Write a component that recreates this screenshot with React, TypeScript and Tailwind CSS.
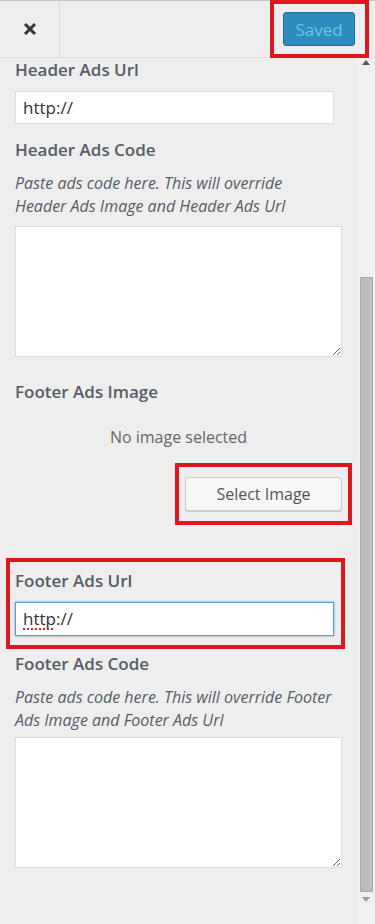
import React from "react"

const font = { fontFamily: '"Open Sans", "Noto Sans", sans-serif' }

function Label({ children, className = "" }: { children: React.ReactNode; className?: string }) {
  return (
    <div className={`text-[17px] leading-[24px] font-semibold text-[#555d66] ${className}`}>
      {children}
    </div>
  )
}

function Hint({ children, className = "" }: { children: React.ReactNode; className?: string }) {
  return (
    <div className={`text-[16px] leading-[23px] italic text-[#555d66] ${className}`}>
      {children}
    </div>
  )
}

export default function App() {
  return (
    <div style={font} className="w-[375px] h-[924px] bg-[#eeeeee] flex flex-col overflow-hidden">
      {/* top bar */}
      <div className="h-[58px] flex items-stretch border-t border-[#c4c4c4] border-b border-b-[#dddddd] shrink-0">
        <button className="w-[60px] border-r border-[#dddddd] flex items-center justify-center">
          <svg className="w-[14px] h-[14px]" viewBox="0 0 14 14" fill="none" stroke="#333" strokeWidth={3}>
            <path d="M2 2l10 10M12 2L2 12" />
          </svg>
        </button>
        <div className="flex-1" />
        <div className="mr-[6px] -mt-px -mb-px border-4 border-[#e0161f] pt-[8px] pl-[9px] pr-[10px]">
          <button className="w-[72px] h-[34px] rounded-[3px] bg-[#2e8cc1] border border-[#1f6d98] text-[#6bc6e8] text-[17px] leading-none">
            Saved
          </button>
        </div>
      </div>

      <div className="flex flex-1 min-h-0">
        {/* settings */}
        <div className="flex-1 pl-[15px]">
          <Label>Header Ads Url</Label>
          <input
            readOnly
            value="http://"
            className="mt-[9px] block w-[319px] h-[33px] bg-white border border-[#dddddd] px-[7px] text-[17px] text-[#333] outline-none"
          />

          <Label className="mt-[14px]">Header Ads Code</Label>
          <Hint className="mt-[10px]">
            Paste ads code here. This will override<br />Header Ads Image and Header Ads Url
          </Hint>
          <textarea className="mt-[8px] block w-[327px] h-[131px] bg-white border border-[#dddddd] outline-none" />

          <Label className="mt-[23px]">Footer Ads Image</Label>
          <div className="mt-[22px] w-[327px] text-center text-[16px] leading-[23px] text-[#666]">
            No image selected
          </div>
          <div className="mt-[14px] w-[337px] flex justify-end">
            <div className="border-4 border-[#e0161f] px-[6px] py-[10px]">
              <button className="w-[157px] h-[34px] rounded-[3px] bg-[#f7f7f7] border border-[#cccccc] shadow-[0_1px_0_#cccccc] text-[16px] text-[#555]">
                Select Image
              </button>
            </div>
          </div>

          <div className="mt-[33px] -ml-[9px] w-[339px] border-4 border-[#e0161f] pl-[5px] pt-[7px] pb-[9px]">
            <Label>Footer Ads Url</Label>
            <div className="mt-[9px] relative w-[319px] h-[34px] bg-white border border-[#5b9dd9] shadow-[0_0_2px_rgba(30,140,190,0.8)] px-[7px] flex items-center text-[17px] text-[#333]">
              <span className="relative">
                http://
                <span className="absolute left-0 bottom-[2px] w-[30px] h-[3px] border-b-2 border-dotted border-[#e02020]" />
              </span>
            </div>
          </div>

          <Label className="mt-[3px]">Footer Ads Code</Label>
          <Hint className="mt-[10px]">
            Paste ads code here. This will override Footer<br />Ads Image and Footer Ads Url
          </Hint>
          <textarea className="mt-[5px] block w-[327px] h-[131px] bg-white border border-[#dddddd] outline-none" />
        </div>

        {/* scrollbar */}
        <div className="w-[18px] flex flex-col items-center bg-[#f0f0f0] pb-[22px]">
          <div className="mt-[2px] w-0 h-0 border-l-[4px] border-r-[4px] border-b-[5px] border-l-transparent border-r-transparent border-b-[#555]" />
          <div className="mt-[212px] w-[13px] flex-1 bg-[#bcbcbc] border border-[#aaaaaa]" />
          <div className="mt-[5px] w-0 h-0 border-l-[4px] border-r-[4px] border-t-[5px] border-l-transparent border-r-transparent border-t-[#999]" />
        </div>
      </div>
    </div>
  )
}
